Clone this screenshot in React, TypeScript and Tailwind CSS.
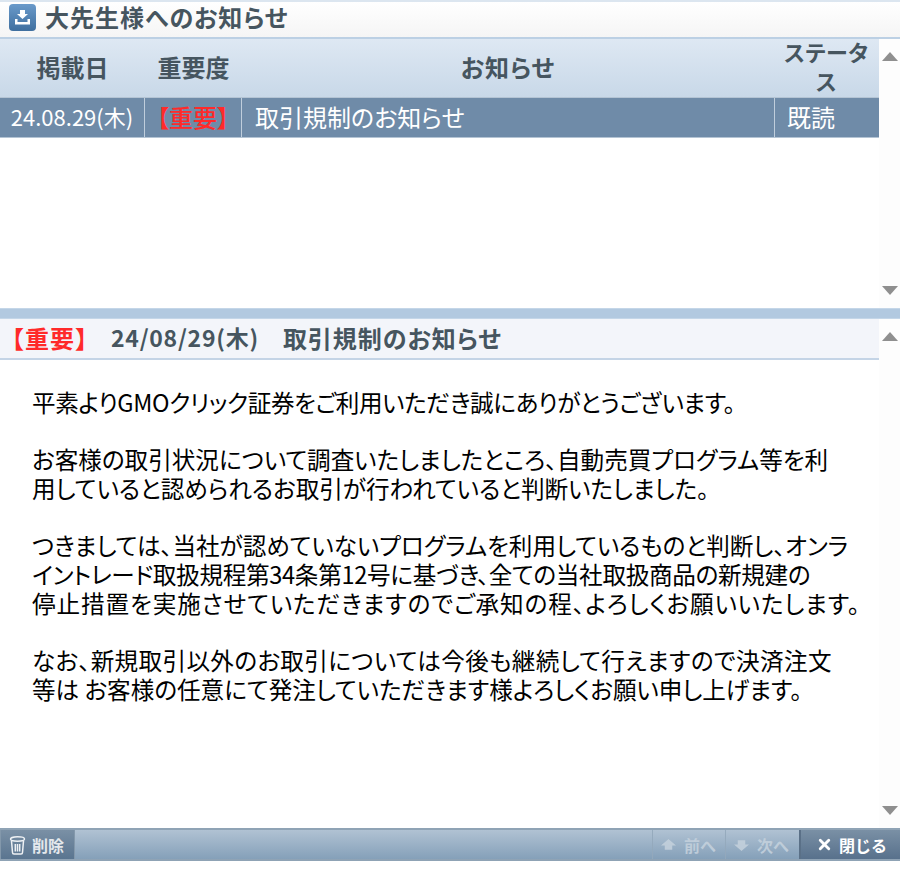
import React from 'react';
import { X } from 'lucide-react';

const font = "font-['Noto_Sans_CJK_JP','Liberation_Sans',sans-serif]";

const ArrowUp = () => <div className="h-0 w-0 border-x-[8px] border-b-[9px] border-x-transparent border-b-[#8f8f8f]" />;
const ArrowDown = () => <div className="h-0 w-0 border-x-[8px] border-t-[9px] border-x-transparent border-t-[#8f8f8f]" />;

const ScrollBar = () => (
  <div className="flex w-[21px] shrink-0 flex-col items-center justify-between bg-[#fdfdfd] pt-[13px] pb-[13px]">
    <ArrowUp />
    <ArrowDown />
  </div>
);

// tracking differs per line, the original font's advances don't match ours evenly
const paragraphs = [
  [{ text: '平素よりGMOクリック証券をご利用いただき誠にありがとうございます。', cls: 'tracking-[-0.4px]' }],
  [
    { text: 'お客様の取引状況について調査いたしましたところ、自動売買プログラム等を利', cls: '' },
    { text: '用していると認められるお取引が行われていると判断いたしました。', cls: '' },
  ],
  [
    { text: 'つきましては、当社が認めていないプログラムを利用しているものと判断し、オンラ', cls: '' },
    { text: 'イントレード取扱規程第34条第12号に基づき、全ての当社取扱商品の新規建の', cls: 'tracking-[-0.3px]' },
    { text: '停止措置を実施させていただきますのでご承知の程、よろしくお願いいたします。', cls: 'tracking-[0.9px]' },
  ],
  [
    { text: 'なお、新規取引以外のお取引については今後も継続して行えますので決済注文', cls: 'tracking-[0.35px]' },
    { text: '等は お客様の任意にて発注していただきます様よろしくお願い申し上げます。', cls: '' },
  ],
];

export default function App() {
  return (
    <div className={`h-[892px] w-[900px] overflow-hidden bg-white ${font}`}>
      {/* title */}
      <div className="flex h-[39px] items-center gap-[9px] border-t-2 border-b-2 border-t-[#dce6f0] border-b-[#bcd0e4] bg-gradient-to-b from-white to-[#f5f5f5] pb-[4px] pl-[9px]">
        <div className="flex h-[27px] w-[27px] items-center justify-center rounded-[4px] bg-gradient-to-b from-[#6a9aca] to-[#3f6f9f]">
          <svg width="17" height="17" viewBox="0 0 17 17" fill="white">
            <path d="M6 1h5v4h3l-5.500 5L3 5h3z" />
            <path d="M1 10h2.500v3h10v-3H16v5.500H1z" />
          </svg>
        </div>
        <span className="pb-[2px] text-[24px] leading-none font-semibold tracking-[1px] text-[#46555f] [font-feature-settings:'palt']">大先生様へのお知らせ</span>
      </div>

      {/* list pane */}
      <div className="flex h-[269px]">
        <div className="flex min-w-0 flex-1 flex-col">
          <div className="flex h-[58px] items-center bg-gradient-to-b from-[#dee8f3] to-[#c8d8e8] pb-[4px] text-center text-[24px] leading-[29px] font-semibold text-[#46555f] [font-feature-settings:'palt']">
            <div className="w-[145px]">掲載日</div>
            <div className="w-[97px]">重要度</div>
            <div className="flex-1 tracking-[1px]">お知らせ</div>
            <div className="w-[105px] text-[22px] tracking-[0.500px] [font-feature-settings:'normal']">ステータス</div>
          </div>
          <div className="flex h-[41px] items-center border-y border-[#b4c4d4] bg-[#6f8ba8] text-[24px] text-white [font-feature-settings:'palt']">
            <div className="flex h-full w-[145px] items-center justify-center border-r border-[#c0cedc] pb-[2px] text-[22px]">24.08.29(木)</div>
            <div className="flex h-full w-[97px] items-center justify-center border-r border-[#c0cedc] pb-[2px] font-medium text-[#ff2a2a] [font-feature-settings:'normal']">【重要】</div>
            <div className="flex h-full flex-1 items-center pb-[2px] pl-[13px]">取引規制のお知らせ</div>
            <div className="flex h-full w-[105px] items-center border-l border-[#c0cedc] pb-[2px] pl-[12px]">既読</div>
          </div>
        </div>
        <ScrollBar />
      </div>

      {/* splitter */}
      <div className="h-[11px] border-y border-[#c4d6e8] bg-[#b2c9e0]" />

      {/* detail pane */}
      <div className="flex h-[509px]">
        <div className="flex min-w-0 flex-1 flex-col">
          <div className="flex h-[41px] items-center border-b-2 border-[#c4d4e6] bg-[#f3f5fa] pb-[2px] text-[24px] font-semibold text-[#46555f]">
            <span className="w-[111px] tracking-[1px] whitespace-nowrap text-[#ff2a2a]">【重要】</span>
            <span className="text-[23px] tracking-[0.750px] [font-feature-settings:'palt']">24/08/29(木)</span>
            <span className="ml-[24px] tracking-[1px] [font-feature-settings:'palt']">取引規制のお知らせ</span>
          </div>
          <div className="pt-[28px] pl-[32px] text-[23.600px] leading-[28.700px] text-black [font-feature-settings:'palt']">
            {paragraphs.map((lines, i) => (
              <div key={i} className="mb-[28.700px]">
                {lines.map((line, j) => (
                  <div key={j} className={`whitespace-nowrap ${line.cls}`}>{line.text}</div>
                ))}
              </div>
            ))}
          </div>
        </div>
        <ScrollBar />
      </div>

      {/* toolbar */}
      <div className="flex h-[33px] border-y-2 border-[#8fa3b5] bg-gradient-to-b from-[#b0c2d3] to-[#85a0b9] text-[16px] font-bold text-[#e4e8ec]">
        <div className="flex w-[75px] items-center gap-[6px] border-x border-[#8398ab] bg-gradient-to-b from-[#7a90a5] to-[#5a7590] pl-[8px]">
          <svg width="17" height="20" viewBox="0 0 17 20" fill="none" stroke="#eef1f4" strokeWidth="1.500">
            <ellipse cx="8.500" cy="4" rx="7" ry="2.200" />
            <path d="M2.500 6l1 11.500q0 1.500 1.500 1.500h7q1.500 0 1.500-1.500l1-11.500M6.300 9v7.500M8.500 9v7.500M10.700 9v7.500" />
          </svg>
          <span>削除</span>
        </div>
        <div className="flex-1" />
        <div className="flex w-[74px] items-center gap-[8px] border-x border-[#94a9bc] pl-[8px] text-[#c3d0dc] opacity-90">
          <svg width="15" height="12" viewBox="0 0 14 11" fill="#c3d0dc"><path d="M7 0l7 6h-3.500v4h-7V6H0z" /></svg>
          <span>前へ</span>
        </div>
        <div className="flex w-[73px] items-center gap-[8px] pl-[8px] text-[#c3d0dc] opacity-90">
          <svg width="15" height="12" viewBox="0 0 14 11" fill="#c3d0dc"><path d="M7 11L0 5h3.500V1h7v4H14z" /></svg>
          <span>次へ</span>
        </div>
        <div className="flex w-[101px] items-center gap-[6px] border-l-2 border-[#5a7087] bg-gradient-to-b from-[#7a90a5] to-[#58718c] pl-[15px] text-white">
          <X size={17} strokeWidth={4} />
          <span>閉じる</span>
        </div>
      </div>
    </div>
  );
}
